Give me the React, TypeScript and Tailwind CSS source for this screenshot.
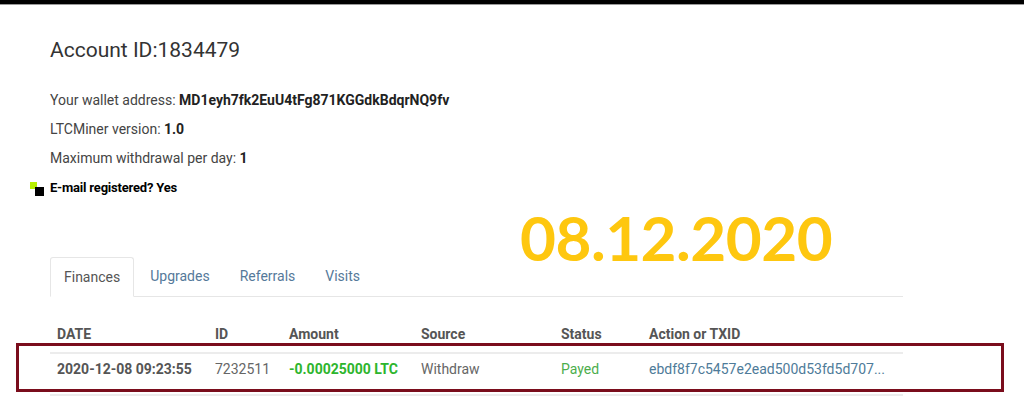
import React from "react";

export default function App() {
  const cols = "grid grid-cols-[158px_74px_132px_140px_88px_1fr]";
  return (
    <div className="relative w-[1024px] h-[407px] bg-white overflow-hidden" style={{ fontFamily: "Roboto, 'Liberation Sans', sans-serif" }}>
      <div className="h-[4px] bg-black" />
      <div className="h-[1px] bg-[#9a9a9a]" />
      <div className="pl-[50px] w-[903px]">
        <h1 className="mt-[31px] text-[21px] leading-[28px] text-[#333]">Account ID:1834479</h1>
        <div className="mt-[22px] flex flex-col text-[14px] text-[#444]">
          <p className="h-[29px] leading-[29px]">Your wallet address: <b className="text-[#222] font-bold">MD1eyh7fk2EuU4tFg871KGGdkBdqrNQ9fv</b></p>
          <p className="h-[29px] leading-[29px]">LTCMiner version: <b className="text-[#222] font-bold">1.0</b></p>
          <p className="h-[29px] leading-[29px]">Maximum withdrawal per day: <b className="text-[#222] font-bold">1</b></p>
          <p className="relative h-[29px] leading-[29px] text-[13px] font-bold text-black tracking-[-0.2px]">
            <span className="absolute left-[-20px] top-[9px] w-[7px] h-[7px] bg-[#b7f000]" />
            <span className="absolute left-[-15px] top-[14px] w-[9px] h-[9px] bg-black" />
            E-mail registered? Yes
          </p>
        </div>
        <div className="mt-[55px] flex border-b border-[#e6e6e6] text-[14px]">
          <div className="h-[40px] px-[13px] leading-[38px] border border-[#e6e6e6] border-b-white -mb-[1px] rounded-t-[3px] text-[#555]">Finances</div>
          <div className="h-[39px] px-[16px] leading-[38px] text-[#55799a]">Upgrades</div>
          <div className="h-[39px] px-[14px] leading-[38px] text-[#55799a]">Referrals</div>
          <div className="h-[39px] px-[16px] leading-[38px] text-[#55799a]">Visits</div>
        </div>
        <div className="mt-[20px] text-[14px]">
          <div className={`${cols} h-[35px] items-center font-bold text-[#555] pb-[1px]`}>
            <div className="px-[7px]">DATE</div>
            <div className="px-[7px]">ID</div>
            <div className="px-[7px]">Amount</div>
            <div className="px-[7px]">Source</div>
            <div className="px-[7px]">Status</div>
            <div className="px-[7px]">Action or TXID</div>
          </div>
          <div className={`${cols} h-[44px] items-start pt-[5px] leading-[20px] border-t-2 border-b-2 border-[#ececec] text-[#666]`}>
            <div className="px-[7px] font-bold text-[#555]">2020-12-08 09:23:55</div>
            <div className="px-[7px]">7232511</div>
            <div className="px-[7px] font-bold text-[#2db52d]">-0.00025000 LTC</div>
            <div className="px-[7px]">Withdraw</div>
            <div className="px-[7px] text-[#4cae4c]">Payed</div>
            <div className="px-[7px] text-[#4e7b99]">ebdf8f7c5457e2ead500d53fd5d707...</div>
          </div>
        </div>
      </div>
      <div className="absolute left-[520px] top-[199px] text-[62px] leading-[76px] font-bold text-[#fec70f] tracking-[-0.5px]" style={{ fontFamily: "Lato, 'Open Sans', sans-serif" }}>08.12.2020</div>
      <div className="absolute left-[16px] top-[343px] w-[988px] h-[49px] border-[3px] border-[#7a0d1c]" />
    </div>
  );
}
